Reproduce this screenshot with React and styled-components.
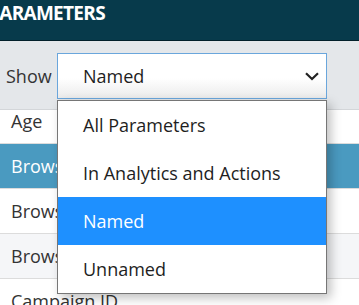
import React from 'react'
import styled, { createGlobalStyle } from 'styled-components'

const Global = createGlobalStyle`
  html, body {
    margin: 0;
    padding: 0;
    overflow: hidden;
    background: #fff;
    font-family: "Open Sans", "Liberation Sans", sans-serif;
  }
`

const Page = styled.div`
  width: 359px;
  height: 305px;
  overflow: hidden;
  position: relative;
`

const Header = styled.div`
  height: 40px;
  background: #073a4b;
  border-bottom: 1px solid #02202a;
  overflow: hidden;
`

const Title = styled.div`
  margin-left: -12px;
  color: #fff;
  font-size: 19px;
  font-weight: 700;
  letter-spacing: -0.7px;
  white-space: nowrap;
`

const Toolbar = styled.div`
  position: relative;
  z-index: 2;
  display: flex;
  align-items: center;
  padding: 12px 0 10px 0;
  background: #e4e7ea;
  border-bottom: 1px solid #d3d6d9;
`

const Label = styled.div`
  width: 51px;
  padding-left: 6px;
  color: #333;
  font-size: 18px;
`

const SelectWrap = styled.div`
  position: relative;
  width: 270px;
`

const SelectBox = styled.div`
  box-sizing: border-box;
  height: 46px;
  display: flex;
  align-items: center;
  justify-content: space-between;
  padding: 0 7px 0 25px;
  border: 1px solid #6aa6dc;
  background: linear-gradient(to bottom, #fff 0%, #fff 55%, #ebebeb 100%);
  color: #1e1e1e;
  font-size: 18px;
`

const Menu = styled.div`
  position: absolute;
  top: calc(100% + 1px);
  left: 0;
  right: 0;
  background: #fff;
  border: 1px solid #767676;
  box-shadow: 4px 4px 10px rgba(0, 0, 0, 0.25);
`

const Option = styled.div`
  height: 48px;
  display: flex;
  align-items: center;
  padding-left: 25px;
  font-size: 18px;
  color: ${p => (p.$active ? '#fff' : '#1e1e1e')};
  background: ${p => (p.$active ? '#1e90ff' : '#fff')};
`

const List = styled.div`
  margin-top: -11px;
`

const Row = styled.div`
  height: 44px;
  display: flex;
  align-items: center;
  padding-left: 11px;
  border-bottom: 1px solid #dcdcdc;
  font-size: 18px;
  white-space: nowrap;
  color: ${p => (p.$selected ? '#fff' : '#333')};
  background: ${p => (p.$selected ? '#4a9ac0' : p.$striped ? '#f5f6f8' : '#fff')};
`

const Chevron = () => (
  <svg width="14" height="9" viewBox="0 0 14 9">
    <path d="M1 1.2 L7 7 L13 1.2" fill="none" stroke="#222" strokeWidth="2.2" />
  </svg>
)

const options = ['All Parameters', 'In Analytics and Actions', 'Named', 'Unnamed']

const rows = [
  { name: 'Age' },
  { name: 'Browser', selected: true },
  { name: 'Browser Language' },
  { name: 'Browser Version', striped: true },
  { name: 'Campaign ID' },
]

const App = () => (
  <Page>
    <Global />
    <Header>
      <Title>PARAMETERS</Title>
    </Header>
    <Toolbar>
      <Label>Show</Label>
      <SelectWrap>
        <SelectBox>
          <span>Named</span>
          <Chevron />
        </SelectBox>
        <Menu>
          {options.map(o => (
            <Option key={o} $active={o === 'Named'}>{o}</Option>
          ))}
        </Menu>
      </SelectWrap>
    </Toolbar>
    <List>
      {rows.map(r => (
        <Row key={r.name} $selected={r.selected} $striped={r.striped}>{r.name}</Row>
      ))}
    </List>
  </Page>
)

export default App
